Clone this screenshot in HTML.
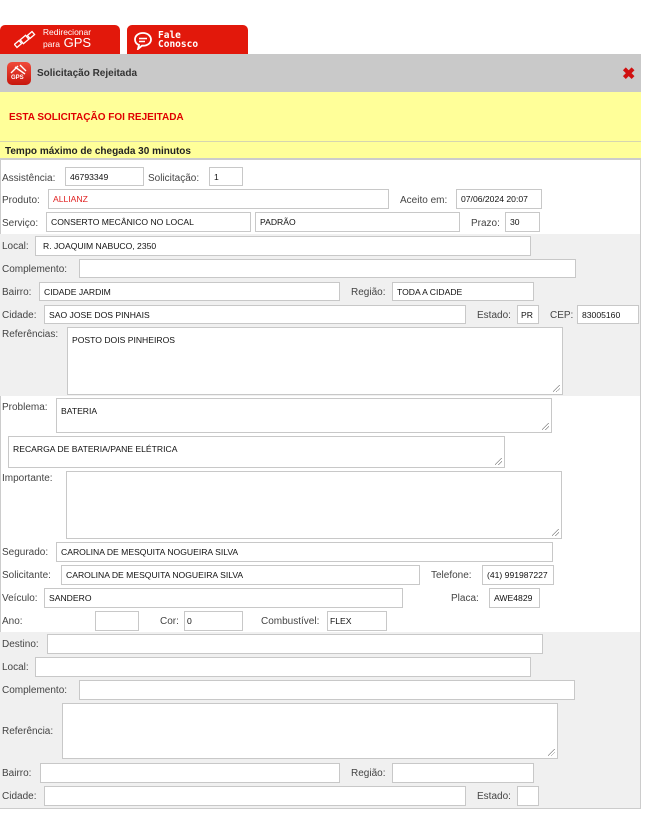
<!DOCTYPE html>
<html><head><meta charset="utf-8"><style>
*{box-sizing:border-box;margin:0;padding:0}
body{width:655px;height:833px;background:#fff;position:relative;overflow:hidden;font-family:"Liberation Sans",sans-serif}
.a{position:absolute}
.l{position:absolute;font-size:10px;color:#444;line-height:12px;margin-top:1px}
.i{position:absolute;border:1px solid #c8c8c8;background:#fff;font-size:8.6px;color:#111;padding:0 4px;display:flex;align-items:center;white-space:nowrap;overflow:hidden}
.t{align-items:flex-start;padding-top:7px}
.t::after{content:"";position:absolute;right:2px;bottom:2px;width:7px;height:7px;background:linear-gradient(135deg,transparent 45%,#888 45%,#888 52%,transparent 52%,transparent 68%,#888 68%,#888 75%,transparent 75%)}
.tab{position:absolute;top:25px;height:30px;background:#e2180b;border-radius:5px 5px 0 0;color:#fff}
</style></head><body>
<div class="tab" style="left:0;width:120px">
<svg class="a" style="left:14px;top:5px" width="22" height="20" viewBox="0 0 22 20"><g fill="none" stroke="#fff" stroke-width="1.3"><rect x="7" y="7" width="7" height="5" transform="rotate(-40 10.5 9.5)"/><rect x="1" y="12" width="6" height="4" transform="rotate(-40 4 14)"/><rect x="14" y="3" width="6" height="4" transform="rotate(-40 17 5)"/></g></svg>
<div class="a" style="left:38px;top:3px;font-size:8.5px;line-height:9px;text-align:center;width:58px">Redirecionar</div>
<div class="a" style="left:38px;top:10px;font-size:13px;line-height:15px;width:58px;text-align:center"><span style="font-size:8.5px">para</span> GPS</div>
</div>
<div class="tab" style="left:127px;width:121px">
<svg class="a" style="left:6px;top:6px" width="20" height="19" viewBox="0 0 20 19"><path d="M10 2C5 2 2 5 2 8.5c0 2.5 1.5 4.5 4 5.5l-1 4 4-3.3H10c5 0 8-3 8-6.2S15 2 10 2z" fill="none" stroke="#fff" stroke-width="1.8"/><path d="M6 7.5h8M6 10.5h6" stroke="#fff" stroke-width="1.5"/></svg>
<div class="a" style="left:31px;top:6px;font-size:9.5px;font-weight:bold;line-height:9px;font-family:'DejaVu Sans Mono',monospace">Fale<br>Conosco</div>
</div>
<div class="a" style="left:0;top:54px;width:641px;height:755px;border:1px solid #ccc;border-top:0"></div>
<div class="a" style="left:0;top:54px;width:641px;height:38px;background:#c9c9c9"></div>
<div class="a" style="left:7px;top:62px;width:24px;height:23px;border-radius:5px;background:linear-gradient(#f04a3a,#c8160c)"><div class="a" style="left:4px;top:13px;font-size:6px;color:#fff;font-weight:bold">GPS</div><svg class="a" style="left:3px;top:2px" width="18" height="11"><path d="M1 9L8 2M5 3l10 7M10 1l6 6" stroke="#fff" stroke-width="1.4" fill="none"/></svg></div>
<div class="a" style="left:37px;top:68px;font-size:10px;font-weight:bold;color:#333">Solicitação Rejeitada</div>
<div class="a" style="left:622px;top:64px;font-size:16px;font-weight:bold;color:#d01010">✖</div>
<div class="a" style="left:0;top:92px;width:641px;height:49px;background:#ffff99"></div>
<div class="a" style="left:9px;top:112px;font-size:10px;font-weight:bold;color:#e00000">ESTA SOLICITAÇÃO FOI REJEITADA</div>
<div class="a" style="left:0;top:141px;width:641px;height:1px;background:#d6d6b0"></div>
<div class="a" style="left:0;top:142px;width:641px;height:18px;background:#ffff99;border-bottom:2px solid #ccc"></div>
<div class="a" style="left:5px;top:146px;font-size:10px;font-weight:bold;color:#222">Tempo máximo de chegada 30 minutos</div>
<div class="a" style="left:0;top:234px;width:640px;height:162px;background:#f0f0f0"></div>
<div class="a" style="left:0;top:632px;width:640px;height:176px;background:#f0f0f0"></div>

<div class="l" style="left:2px;top:172px">Assistência:</div><div class="i" style="left:65px;top:167px;width:79px;height:19px">46793349</div>
<div class="l" style="left:148px;top:172px">Solicitação:</div><div class="i" style="left:209px;top:167px;width:34px;height:19px">1</div>
<div class="l" style="left:2px;top:194px">Produto:</div><div class="i" style="left:48px;top:189px;width:341px;height:20px;color:#e02020">ALLIANZ</div>
<div class="l" style="left:400px;top:194px">Aceito em:</div><div class="i" style="left:456px;top:189px;width:86px;height:20px">07/06/2024 20:07</div>
<div class="l" style="left:2px;top:217px">Serviço:</div><div class="i" style="left:46px;top:212px;width:205px;height:20px">CONSERTO MECÂNICO NO LOCAL</div>
<div class="i" style="left:255px;top:212px;width:205px;height:20px">PADRÃO</div>
<div class="l" style="left:471px;top:217px">Prazo:</div><div class="i" style="left:505px;top:212px;width:35px;height:20px">30</div>

<div class="l" style="left:2px;top:240px">Local:</div><div class="i" style="left:35px;top:236px;width:496px;height:20px;padding-left:7px">R. JOAQUIM NABUCO, 2350</div>
<div class="l" style="left:2px;top:263px">Complemento:</div><div class="i" style="left:79px;top:259px;width:497px;height:19px"></div>
<div class="l" style="left:2px;top:286px">Bairro:</div><div class="i" style="left:39px;top:282px;width:301px;height:19px">CIDADE JARDIM</div>
<div class="l" style="left:351px;top:286px">Região:</div><div class="i" style="left:392px;top:282px;width:142px;height:19px">TODA A CIDADE</div>
<div class="l" style="left:2px;top:309px">Cidade:</div><div class="i" style="left:44px;top:305px;width:422px;height:19px">SAO JOSE DOS PINHAIS</div>
<div class="l" style="left:477px;top:309px">Estado:</div><div class="i" style="left:517px;top:305px;width:22px;height:19px;padding:0 3px">PR</div>
<div class="l" style="left:550px;top:309px">CEP:</div><div class="i" style="left:577px;top:305px;width:62px;height:19px">83005160</div>
<div class="l" style="left:2px;top:328px">Referências:</div><div class="i t" style="left:67px;top:327px;width:496px;height:68px">POSTO DOIS PINHEIROS</div>

<div class="l" style="left:2px;top:401px">Problema:</div><div class="i t" style="left:56px;top:398px;width:496px;height:35px">BATERIA</div>
<div class="i t" style="left:8px;top:436px;width:497px;height:32px">RECARGA DE BATERIA/PANE ELÉTRICA</div>
<div class="l" style="left:2px;top:472px">Importante:</div><div class="i t" style="left:66px;top:471px;width:496px;height:68px"></div>
<div class="l" style="left:2px;top:546px">Segurado:</div><div class="i" style="left:56px;top:542px;width:497px;height:20px">CAROLINA DE MESQUITA NOGUEIRA SILVA</div>
<div class="l" style="left:2px;top:569px">Solicitante:</div><div class="i" style="left:61px;top:565px;width:359px;height:20px">CAROLINA DE MESQUITA NOGUEIRA SILVA</div>
<div class="l" style="left:431px;top:569px">Telefone:</div><div class="i" style="left:482px;top:565px;width:72px;height:20px">(41) 991987227</div>
<div class="l" style="left:2px;top:592px">Veículo:</div><div class="i" style="left:44px;top:588px;width:359px;height:20px">SANDERO</div>
<div class="l" style="left:451px;top:592px">Placa:</div><div class="i" style="left:489px;top:588px;width:51px;height:20px">AWE4829</div>
<div class="l" style="left:2px;top:615px">Ano:</div><div class="i" style="left:95px;top:611px;width:44px;height:20px"></div>
<div class="l" style="left:160px;top:615px">Cor:</div><div class="i" style="left:184px;top:611px;width:59px;height:20px;padding-left:2px">0</div>
<div class="l" style="left:261px;top:615px">Combustível:</div><div class="i" style="left:327px;top:611px;width:60px;height:20px;padding-left:2px">FLEX</div>

<div class="l" style="left:2px;top:638px">Destino:</div><div class="i" style="left:47px;top:634px;width:496px;height:20px"></div>
<div class="l" style="left:2px;top:661px">Local:</div><div class="i" style="left:35px;top:657px;width:496px;height:20px"></div>
<div class="l" style="left:2px;top:684px">Complemento:</div><div class="i" style="left:79px;top:680px;width:496px;height:20px"></div>
<div class="l" style="left:2px;top:725px">Referência:</div><div class="i t" style="left:62px;top:703px;width:496px;height:56px"></div>
<div class="l" style="left:2px;top:767px">Bairro:</div><div class="i" style="left:40px;top:763px;width:300px;height:20px"></div>
<div class="l" style="left:351px;top:767px">Região:</div><div class="i" style="left:392px;top:763px;width:142px;height:20px"></div>
<div class="l" style="left:2px;top:790px">Cidade:</div><div class="i" style="left:44px;top:786px;width:422px;height:20px"></div>
<div class="l" style="left:477px;top:790px">Estado:</div><div class="i" style="left:517px;top:786px;width:22px;height:20px"></div>
</body></html>
